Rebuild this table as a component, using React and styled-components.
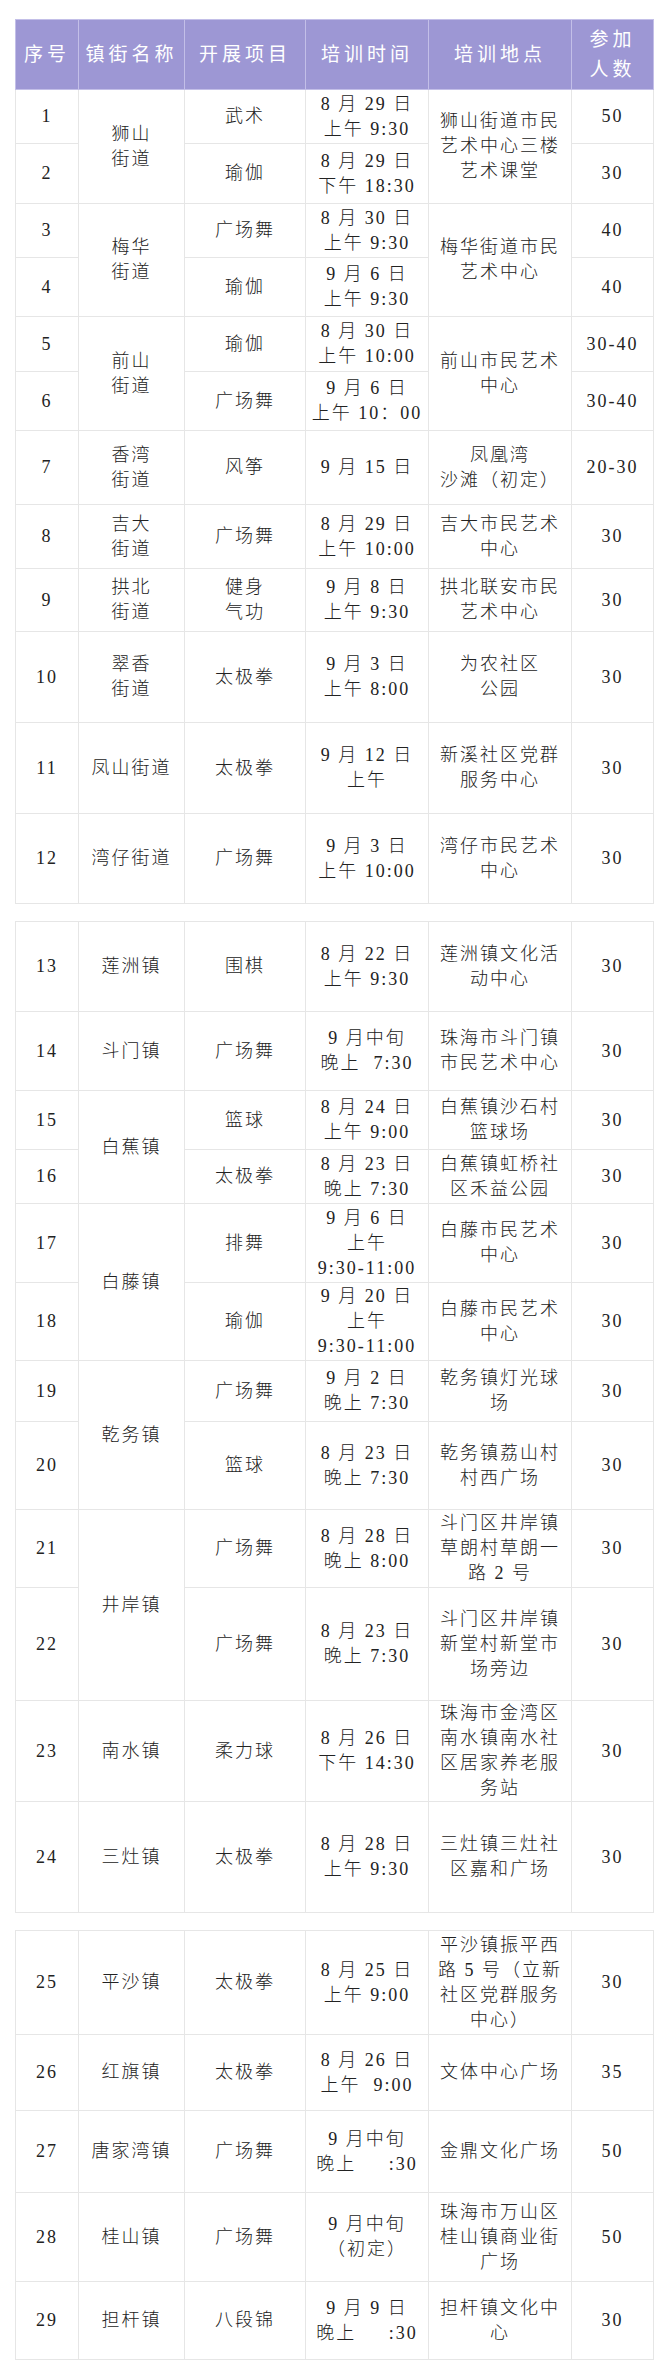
import React from "react";
import styled, { createGlobalStyle } from "styled-components";

const GlobalStyle = createGlobalStyle`
  html, body {
    margin: 0;
    padding: 0;
    background: #fff;
  }
  body {
    font-family: "Liberation Serif", "Noto Sans CJK SC", serif;
    color: #222;
  }
`;

const Page = styled.div`
  width: 660px;
  box-sizing: border-box;
  padding: 19px 0 4px 15px;
  display: flex;
  flex-direction: column;
  gap: 17px;
`;

const Table = styled.table`
  width: 638px;
  border-collapse: collapse;
  table-layout: fixed;
  font-size: 18px;
  line-height: 25px;
  letter-spacing: 2px;
`;

const Th = styled.th`
  background: #9d97d4;
  color: #fff;
  font-weight: 400;
  border: 1px solid #c3bfe8;
  padding: 0;
  font-size: 19px;
  letter-spacing: 4px;
  line-height: 30px;
  text-align: center;
  vertical-align: middle;
`;

const Row = styled.tr`
  height: ${(p) => p.$h}px;
`;

const Td = styled.td`
  border: 1px solid #e6e6e6;
  padding: 0;
  text-align: center;
  vertical-align: middle;
  white-space: pre;
  font-weight: 300;
`;

const widths = [63, 106, 121, 123, 143, 82];

const Cols = () => (
  <colgroup>
    {widths.map((w, i) => (
      <col key={i} style={{ width: w }} />
    ))}
  </colgroup>
);

const Lines = ({ text }) =>
  String(text)
    .split("|")
    .map((l, i, arr) => (
      <React.Fragment key={i}>
        {l}
        {i < arr.length - 1 && <br />}
      </React.Fragment>
    ));

// town / place: [text, rowSpan]; left out when a span above covers the cell
const part1 = [
  { h: 54, n: 1, town: ["狮山|街道", 2], item: "武术", time: "8 月 29 日|上午 9:30", place: ["狮山街道市民|艺术中心三楼|艺术课堂", 2], count: "50" },
  { h: 60, n: 2, item: "瑜伽", time: "8 月 29 日|下午 18:30", count: "30" },
  { h: 54, n: 3, town: ["梅华|街道", 2], item: "广场舞", time: "8 月 30 日|上午 9:30", place: ["梅华街道市民|艺术中心", 2], count: "40" },
  { h: 59, n: 4, item: "瑜伽", time: "9 月 6 日|上午 9:30", count: "40" },
  { h: 55, n: 5, town: ["前山|街道", 2], item: "瑜伽", time: "8 月 30 日|上午 10:00", place: ["前山市民艺术|中心", 2], count: "30-40" },
  { h: 59, n: 6, item: "广场舞", time: "9 月 6 日|上午 10：00", count: "30-40" },
  { h: 74, n: 7, town: ["香湾|街道", 1], item: "风筝", time: "9 月 15 日", place: ["凤凰湾|沙滩（初定）", 1], count: "20-30" },
  { h: 64, n: 8, town: ["吉大|街道", 1], item: "广场舞", time: "8 月 29 日|上午 10:00", place: ["吉大市民艺术|中心", 1], count: "30" },
  { h: 63, n: 9, town: ["拱北|街道", 1], item: "健身|气功", time: "9 月 8 日|上午 9:30", place: ["拱北联安市民|艺术中心", 1], count: "30" },
  { h: 91, n: 10, town: ["翠香|街道", 1], item: "太极拳", time: "9 月 3 日|上午 8:00", place: ["为农社区|公园", 1], count: "30" },
  { h: 91, n: 11, town: ["凤山街道", 1], item: "太极拳", time: "9 月 12 日|上午", place: ["新溪社区党群|服务中心", 1], count: "30" },
  { h: 90, n: 12, town: ["湾仔街道", 1], item: "广场舞", time: "9 月 3 日|上午 10:00", place: ["湾仔市民艺术|中心", 1], count: "30" },
];

const part2 = [
  { h: 90, n: 13, town: ["莲洲镇", 1], item: "围棋", time: "8 月 22 日|上午 9:30", place: ["莲洲镇文化活|动中心", 1], count: "30" },
  { h: 79, n: 14, town: ["斗门镇", 1], item: "广场舞", time: "9 月中旬|晚上\u00a0\u00a07:30", place: ["珠海市斗门镇|市民艺术中心", 1], count: "30" },
  { h: 59, n: 15, town: ["白蕉镇", 2], item: "篮球", time: "8 月 24 日|上午 9:00", place: ["白蕉镇沙石村|篮球场", 1], count: "30" },
  { h: 54, n: 16, item: "太极拳", time: "8 月 23 日|晚上 7:30", place: ["白蕉镇虹桥社|区禾益公园", 1], count: "30" },
  { h: 79, n: 17, town: ["白藤镇", 2], item: "排舞", time: "9 月 6 日|上午|9:30-11:00", place: ["白藤市民艺术|中心", 1], count: "30" },
  { h: 78, n: 18, item: "瑜伽", time: "9 月 20 日|上午|9:30-11:00", place: ["白藤市民艺术|中心", 1], count: "30" },
  { h: 61, n: 19, town: ["乾务镇", 2], item: "广场舞", time: "9 月 2 日|晚上 7:30", place: ["乾务镇灯光球|场", 1], count: "30" },
  { h: 88, n: 20, item: "篮球", time: "8 月 23 日|晚上 7:30", place: ["乾务镇荔山村|村西广场", 1], count: "30" },
  { h: 78, n: 21, town: ["井岸镇", 2], item: "广场舞", time: "8 月 28 日|晚上 8:00", place: ["斗门区井岸镇|草朗村草朗一|路 2 号", 1], count: "30" },
  { h: 113, n: 22, item: "广场舞", time: "8 月 23 日|晚上 7:30", place: ["斗门区井岸镇|新堂村新堂市|场旁边", 1], count: "30" },
  { h: 100, n: 23, town: ["南水镇", 1], item: "柔力球", time: "8 月 26 日|下午 14:30", place: ["珠海市金湾区|南水镇南水社|区居家养老服|务站", 1], count: "30" },
  { h: 111, n: 24, town: ["三灶镇", 1], item: "太极拳", time: "8 月 28 日|上午 9:30", place: ["三灶镇三灶社|区嘉和广场", 1], count: "30" },
];

const part3 = [
  { h: 104, n: 25, town: ["平沙镇", 1], item: "太极拳", time: "8 月 25 日|上午 9:00", place: ["平沙镇振平西|路 5 号（立新|社区党群服务|中心）", 1], count: "30" },
  { h: 76, n: 26, town: ["红旗镇", 1], item: "太极拳", time: "8 月 26 日|上午\u00a0\u00a09:00", place: ["文体中心广场", 1], count: "35" },
  { h: 82, n: 27, town: ["唐家湾镇", 1], item: "广场舞", time: "9 月中旬|晚上\u00a0\u00a0\u00a0\u00a0\u00a0:30", place: ["金鼎文化广场", 1], count: "50" },
  { h: 89, n: 28, town: ["桂山镇", 1], item: "广场舞", time: "9 月中旬|（初定）", place: ["珠海市万山区|桂山镇商业街|广场", 1], count: "50" },
  { h: 78, n: 29, town: ["担杆镇", 1], item: "八段锦", time: "9 月 9 日|晚上\u00a0\u00a0\u00a0\u00a0\u00a0:30", place: ["担杆镇文化中|心", 1], count: "30" },
];

const headers = ["序号", "镇街名称", "开展项目", "培训时间", "培训地点", "参加|人数"];

function Schedule({ rows, withHead }) {
  return (
    <Table>
      <Cols />
      <tbody>
        {withHead && (
          <Row $h={70}>
            {headers.map((h) => (
              <Th key={h}>
                <Lines text={h} />
              </Th>
            ))}
          </Row>
        )}
        {rows.map((r) => (
          <Row key={r.n} $h={r.h}>
            <Td>{r.n}</Td>
            {r.town && (
              <Td rowSpan={r.town[1]}>
                <Lines text={r.town[0]} />
              </Td>
            )}
            <Td>
              <Lines text={r.item} />
            </Td>
            <Td>
              <Lines text={r.time} />
            </Td>
            {r.place && (
              <Td rowSpan={r.place[1]}>
                <Lines text={r.place[0]} />
              </Td>
            )}
            <Td>{r.count}</Td>
          </Row>
        ))}
      </tbody>
    </Table>
  );
}

export default function App() {
  return (
    <>
      <GlobalStyle />
      <Page>
        <Schedule rows={part1} withHead />
        <Schedule rows={part2} />
        <Schedule rows={part3} />
      </Page>
    </>
  );
}
